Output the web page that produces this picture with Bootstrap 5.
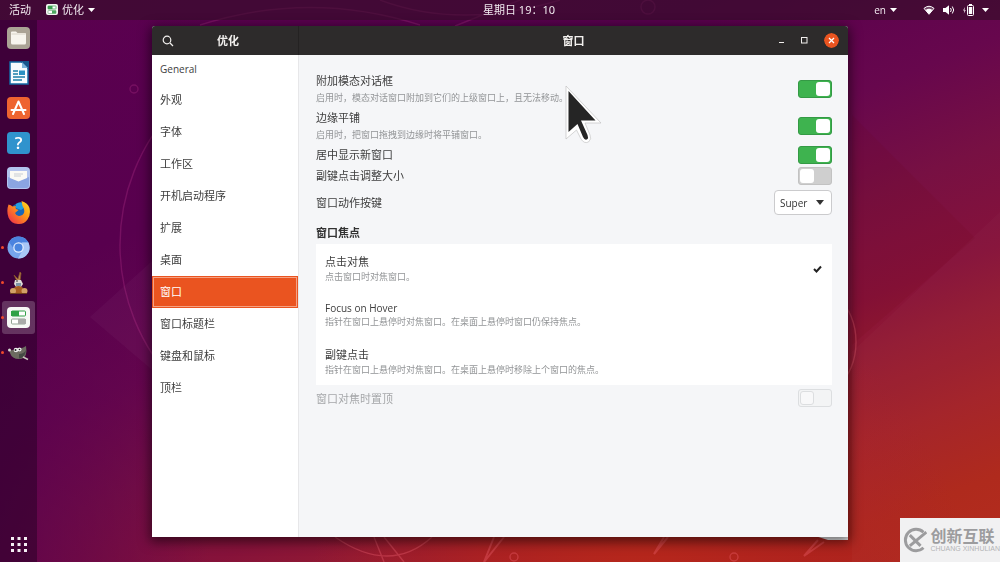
<!DOCTYPE html>
<html lang="zh-CN">
<head>
<meta charset="utf-8">
<meta name="viewport" content="width=device-width, initial-scale=1">
<title>优化 - 窗口</title>
<link href="https://cdn.jsdelivr.net/npm/bootstrap@5.3.0/dist/css/bootstrap.min.css" rel="stylesheet">
<style>
:root { --ink: #3d3d3d; --orange: #ea5420; --green: #3eb34f; }
body { font-family: "Noto Sans", "Noto Sans CJK SC", sans-serif; font-size: 11px; line-height: 16px; color: var(--ink); background: #58004c; }
.latin { font-family: "Open Sans", "Noto Sans CJK SC", sans-serif; font-size: 10px; font-weight: 500; }
.shell { min-height: 100vh; }
.wallpaper { z-index: -1; }
/* top panel */
.topbar { height: 20px; background: rgba(52, 14, 38, .62); color: #f3ecf1; display: grid; grid-template-columns: 1fr auto 1fr; }
.topbar button, .dock button, .headbar button { background: none; border: 0; padding: 0; color: inherit; line-height: 16px; }
.topbar svg, .dock svg, .headbar svg { display: block; }
.activities { margin-left: 9px; }
.appmenu { margin-left: 15px; gap: 4px; }
.tray { gap: 6px; margin-right: 11px; }
.clock { padding-left: 38px; }
/* dock */
.dock { width: 37px; background: rgba(35, 0, 35, .5); padding: 1px 2px 8px; gap: 2px; }
.dock .launcher { width: 33px; height: 33px; border-radius: 3px; position: relative; display: flex; align-items: center; justify-content: center; }
.dock .launcher.current { background: rgba(255, 255, 255, .2); }
.dock .running::before { content: ""; position: absolute; left: -1px; top: 15px; width: 3px; height: 3px; border-radius: 50%; background: #f0492c; }
.help-mark { font: 600 17px/20px "Open Sans", sans-serif; fill: #fff; }
/* window */
.desk { padding: 6px 152px 25px 115px; }
.win { background: #f5f6f8; box-shadow: 0 3px 12px 2px rgba(0, 0, 0, .55); border-radius: 3px 3px 0 0; }
.headbar { height: 29px; background: #2d2b2b; color: #f2f0ee; border-radius: 3px 3px 0 0; }
.headbar h1, .headbar h2 { font-size: 11px; line-height: 16px; font-weight: 700; margin: 0; }
.side { width: 147px; }
.head-side { border-right: 1px solid #242222; padding-left: 10px; }
.side-list { background: #fff; border-right: 1px solid #e7e7e9; }
.side-list .list-group-item { border: 0; border-radius: 0; padding: 8px; color: var(--ink); background: #fff; font-size: 11px; }
.side-list .list-group-item.short { padding-top: 6px; padding-bottom: 7px; font-size: 10px; }
.side-list .list-group-item.active { background: var(--orange); color: #fff; outline: 1px solid #f5a183; outline-offset: -2px; margin: 0; }
.closer { width: 15px; height: 15px; border-radius: 50%; }
.wm { gap: 16px; padding-right: 9px; }
.panel { padding: 15px 16px 16px 17px; }
.opt { min-height: 21px; }
.opt.tall { min-height: 37px; }
.opt label { line-height: 17px; }
.desc { font-size: 9px; line-height: 17px; color: #929496; }
.form-switch { padding: 0; margin: 0; min-height: 0; }
.form-switch .form-check-input { display: block; width: 34px; height: 18px; margin: 0; float: none; border-radius: 3px; background: #cfcfcf; border: 1px solid #c2c2c2; position: relative; transition: none; box-shadow: none; }
.form-switch .form-check-input::before { content: ""; position: absolute; left: 1px; top: 1px; width: 14px; height: 14px; border-radius: 3px; background: #fff; }
.form-switch .form-check-input:checked { background: var(--green); border-color: #349a45; }
.form-switch .form-check-input:checked::before { left: auto; right: 1px; }
.form-switch .form-check-input:disabled { background: #f3f4f5; border-color: #dcdee0; opacity: 1; }
.form-switch .form-check-input:disabled::before { background: #f8f8f9; border: 1px solid #dcdee0; }
.keysel { width: 58px; height: 25px; border: 1px solid #cbcbcd; border-radius: 4px; font-size: 10px; line-height: 16px; padding: 3px 5px; color: #333; background: #fff url("data:image/svg+xml,%3Csvg xmlns='http://www.w3.org/2000/svg' viewBox='0 0 8 5'%3E%3Cpath d='M0 0h8L4 5z' fill='%23333'/%3E%3C/svg%3E") no-repeat right 7px center / 8px 5px; }
.focus-title { font-size: 11px; line-height: 16px; font-weight: 700; margin: 10px 0 3px; color: #333; }
.focus-list { background: #fff; padding: 2px 0 0; gap: 2px; }
.focus-list .list-group-item { border: 0; background: none; padding: 8px 10px 8px 9px; color: var(--ink); }
.focus-list .desc { line-height: 14px; }
.focus-list .name { line-height: 16px; }
.focus-list .name.latin { line-height: 13px; }
.focus-list .tick { visibility: hidden; }
.focus-list input:checked ~ .tick { visibility: visible; }
.off label { color: #a5a7a9; }
.pointer { left: 59%; top: 58px; pointer-events: none; }
/* site mark */
.sitemark { width: 100px; height: 44px; background: #f1f1f2; color: #9c9c9e; gap: 3px; padding-left: 2px; }
.sitemark .zh { font-size: 16px; line-height: 18px; font-weight: 700; }
.sitemark .en { font: 7px/8px "Liberation Sans", sans-serif; white-space: nowrap; color: #b4b4b6; }
</style>
</head>
<body>
<svg class="wallpaper position-fixed top-0 start-0 w-100 h-100" viewBox="0 0 1000 562" preserveAspectRatio="none" aria-hidden="true">
  <defs>
    <linearGradient id="sky" gradientUnits="userSpaceOnUse" x1="0" y1="0" x2="328" y2="819">
      <stop offset="0" stop-color="#5c0050"/><stop offset=".3" stop-color="#58004e"/><stop offset=".46" stop-color="#67074d"/>
      <stop offset=".57" stop-color="#771043"/><stop offset=".68" stop-color="#86123a"/><stop offset=".74" stop-color="#921a32"/>
      <stop offset=".83" stop-color="#a32127"/><stop offset=".92" stop-color="#ae2619"/><stop offset="1" stop-color="#b3281a"/>
    </linearGradient>
    <radialGradient id="glow" gradientUnits="userSpaceOnUse" cx="640" cy="600" r="330">
      <stop offset="0" stop-color="#b8281a"/><stop offset=".5" stop-color="#b0221f" stop-opacity=".7"/><stop offset="1" stop-color="#a81e28" stop-opacity="0"/>
    </radialGradient>
    <linearGradient id="leftdim" x1="0" y1="0" x2="1" y2="0"><stop offset="0" stop-color="#58004e" stop-opacity=".75"/><stop offset="1" stop-color="#58004e" stop-opacity="0"/></linearGradient>
  </defs>
  <rect width="1000" height="562" fill="url(#sky)"/>
  <rect width="1000" height="562" fill="url(#glow)"/>
  <rect width="210" height="562" fill="url(#leftdim)"/>
  <path d="M90 317L170 245V385z" fill="#fff" opacity=".03"/>
  <path d="M1000 212L852 352V562H1000z" fill="#fff" opacity=".02"/>
  <path d="M852 115L975 238 852 345z" fill="#600" opacity=".08"/>
  <g fill="none" stroke="#d0409a" stroke-opacity=".25" stroke-width="1.4">
    <circle cx="320" cy="245" r="200"/><circle cx="134" cy="89" r="4"/><circle cx="648" cy="7" r="7"/>
    <path d="M200 25Q310 -10 420 25M455 26L520 0M380 0Q460 30 560 0"/>
  </g>
  <g fill="none" stroke="#ff7080" stroke-opacity=".3" stroke-width="1.4">
    <path d="M374 537l10 25M335 537Q390 575 432 537M384 537l20 25"/><circle cx="514" cy="557" r="4"/><circle cx="734" cy="557" r="4"/>
    <path d="M494 537l-10 25 20-25M664 537l-10 17 14-17" stroke-width="2"/><circle cx="790" cy="342" r="66"/>
    <path d="M818 540l-14 16 20-14" stroke-width="2"/>
  </g>
  <path d="M812 535H848V540H828z" fill="#f1f1f3"/>
</svg>

<div class="shell d-flex flex-column">
  <header class="topbar align-items-center">
    <div class="d-flex align-items-center">
      <button class="activities" type="button">活动</button>
      <button class="appmenu d-flex align-items-center" type="button">
        <svg width="12" height="12" viewBox="0 0 24 24"><rect width="24" height="22" rx="4" fill="#f4f6f2"/><rect x="4" y="4" width="16" height="6" rx="1" fill="#fff" stroke="#3b9e50" stroke-width="1.5"/><path d="M4 4h9v6H4z" fill="#3b9e50"/><rect x="4" y="13" width="16" height="6" rx="1" fill="#fff" stroke="#84b68d" stroke-width="1.5"/><path d="M12 13h8v6h-8z" fill="#4ca960"/></svg>
        优化
        <svg width="7" height="4" viewBox="0 0 7 4"><path d="M0 0h7L3.500 4z" fill="#fff"/></svg>
      </button>
    </div>
    <time class="clock">星期日 19：10</time>
    <div class="tray d-flex align-items-center justify-content-end">
      <button class="latin d-flex align-items-center gap-1 me-3 pe-1" type="button">en <svg width="7" height="4" viewBox="0 0 7 4"><path d="M0 0h7L3.500 4z" fill="#fff"/></svg></button>
      <button class="d-flex align-items-center gap-2" type="button" aria-label="系统菜单">
        <svg width="12" height="10" viewBox="0 0 12 10"><path d="M1 3.400Q6-.9 11 3.400L6 9.300z" fill="#fff" fill-opacity=".25" stroke="#fff"/><path d="M2.600 5Q6 2.300 9.400 5L6 9z" fill="#fff"/></svg>
        <svg width="12" height="10" viewBox="0 0 12 10"><path d="M0 3h2.500L6 .3v9.400L2.500 7H0z" fill="#fff"/><path d="M7.500 3q1.600 2 0 4M9.300 1.500q2.800 3.500 0 7" fill="none" stroke="#fff"/></svg>
        <svg width="11" height="12" viewBox="0 0 11 12"><path d="M2 3L0 6.500h1.300L.8 9.500 2.800 6H1.500z" fill="#e8d9e4"/><rect x="4.500" y="1.500" width="6" height="10" rx="1" fill="none" stroke="#fff"/><path d="M5.800 3h3.400v7H5.800zM6 0h3v1.500H6z" fill="#fff"/></svg>
        <svg width="7" height="4" viewBox="0 0 7 4"><path d="M0 0h7L3.500 4z" fill="#fff"/></svg>
      </button>
    </div>
  </header>

  <div class="d-flex flex-fill">
    <nav class="dock d-flex flex-column flex-shrink-0" aria-label="程序坞">
      <button class="launcher" type="button" aria-label="文件"><svg width="23" height="22" viewBox="0 0 23 22"><rect width="23" height="22" rx="4" fill="#aaa395"/><path d="M4 5.500q0-1 1-1h4l1.500 1.500H18q1 0 1 1V16q0 1.500-1.500 1.500h-12Q4 17.500 4 16z" fill="#f7f5ee"/><path d="M4.500 7h14" stroke="#d8d3c7"/></svg></button>
      <button class="launcher" type="button" aria-label="文档"><svg width="20" height="24" viewBox="0 0 20 24"><path d="M1 1h12l6 6v16H1z" fill="#f9fcfe" stroke="#156aa5" stroke-width="1.500"/><path d="M11 0h9v9z" fill="#17548c"/><path d="M13 1v6h6z" fill="#7db3dc"/><path d="M4 10h5M4 13h5M4 16h12M4 19h9" stroke="#1d7fa9" stroke-width="1.500"/><rect x="10" y="9.500" width="6" height="4.500" fill="#2b91c2"/></svg></button>
      <button class="launcher" type="button" aria-label="软件"><svg width="23" height="22" viewBox="0 0 23 22"><rect width="23" height="22" rx="4" fill="#ee6430"/><path d="M6 17L11.500 4.500 17 17M4.500 13h14" fill="none" stroke="#fff" stroke-width="2" stroke-linecap="round" stroke-linejoin="round"/></svg></button>
      <button class="launcher" type="button" aria-label="帮助"><svg width="23" height="22" viewBox="0 0 23 22"><rect width="23" height="22" rx="3.500" fill="#3093cd"/><text class="help-mark" x="11.500" y="17" text-anchor="middle">?</text></svg></button>
      <button class="launcher" type="button" aria-label="邮件"><svg width="23" height="22" viewBox="0 0 23 22"><rect width="23" height="22" rx="4" fill="#b3c4ee"/><path d="M1 10l10.500 4L22 10v8q0 3-3 3H4q-3 0-3-3z" fill="#8ba5e2"/><path d="M3 4h17v7l-8.500 3.500L3 11z" fill="#fbfaf5"/><path d="M7 7h9M7 9h7" stroke="#c8cdd4"/></svg></button>
      <button class="launcher" type="button" aria-label="Firefox"><svg width="24" height="24" viewBox="0 0 24 24"><defs><linearGradient id="fox" x1="1" y1="0" x2="0" y2="1"><stop offset="0" stop-color="#ffe226"/><stop offset=".4" stop-color="#ff9a16"/><stop offset="1" stop-color="#ee2152"/></linearGradient></defs><circle cx="12.500" cy="11" r="9" fill="#1767b8"/><path d="M9 3q3-2.500 6-1.500 3 1 4 4L14 9 9 7z" fill="#21a0e0"/><path d="M1.500 3.500Q4 4 5.500 5.500L9 5q-.8 1.500 0 3l2.500 1-3.500 3q1.500 3.500 4.500 3 3.500-.5 4.500-3 1-4-1.500-7l-1-5Q21 2 22.500 7q1.500 7-2 11.500Q17 23.500 11 23 4 22.500 1.500 16.500-.8 10 1.500 3.500z" fill="url(#fox)"/></svg></button>
      <button class="launcher running" type="button" aria-label="Chromium"><svg width="23" height="23" viewBox="0 0 23 23"><circle cx="11.500" cy="11.500" r="11" fill="#76a4ec"/><path d="M2 6Q6 .5 11.500 .5q6.500 0 10 6H11.500L7 13z" fill="#4b83df"/><path d="M21.500 6.500Q25 15 18 20.500q-3 2.300-7 2l5-9-1-7z" fill="#a9c7f6"/><circle cx="11.500" cy="11.500" r="5.300" fill="#e2ecfd"/><circle cx="11.500" cy="11.500" r="4" fill="#4a85df"/></svg></button>
      <button class="launcher running" type="button" aria-label="Kazam"><svg width="20" height="24" viewBox="0 0 20 24"><path d="M8 10L5 4l4 4 2-7 1 1-1 8z" fill="#b98958" stroke="#875226" stroke-width=".8"/><path d="M6 9h6l2 4-2 3H7l-2-3z" fill="#dfddda"/><path d="M7 12h5v3H7z" fill="#7d96a8"/><ellipse cx="9.500" cy="19" rx="5" ry="4" fill="#a85e23"/><circle cx="4" cy="20" r="3" fill="#d2a267"/><circle cx="15.500" cy="20" r="3" fill="#d2a267"/><path d="M1 22.500h17" stroke="#70401d"/><circle cx="8" cy="10" r=".8" fill="#222"/></svg></button>
      <button class="launcher current running" type="button" aria-label="优化"><svg width="23" height="21" viewBox="0 0 23 21"><rect width="23" height="21" rx="4" fill="#f7f8f6"/><rect x="4.500" y="4" width="14" height="5" rx="1" fill="#fff" stroke="#329f48"/><path d="M4 4h8v5H4z" fill="#30a146"/><rect x="4.500" y="12" width="14" height="5" rx="1" fill="#fff" stroke="#91a394"/><path d="M11 12h8v5h-8z" fill="#a9aaa9"/></svg></button>
      <button class="launcher running" type="button" aria-label="GIMP"><svg width="21" height="16" viewBox="0 0 21 16"><path d="M1 5q5 1 8-2 5 1 9-2 .8 5 0 8-1 5-7 5-7 0-9-6z" fill="#6c6b60"/><path d="M11 9q5 0 7-4-1 8-7 8.500z" fill="#444a44"/><circle cx="8" cy="5" r="2.300" fill="#eee"/><circle cx="11.500" cy="4.500" r="2" fill="#eee"/><circle cx="7.500" cy="5" r="1" fill="#222"/><circle cx="11.500" cy="4.500" r=".8" fill="#222"/><circle cx="1.500" cy="5" r="1.500" fill="#d8dbd5"/><path d="M15 12l5 2.500" stroke="#c9c5be" stroke-width="1.500"/></svg></button>
      <button class="mt-auto d-flex justify-content-center" type="button" aria-label="显示应用程序"><svg width="16" height="20" viewBox="0 0 16 20" fill="#f5eff4"><path d="M0 3h3v3H0zM6.500 3h3v3h-3zM13 3h3v3h-3zM0 9h3v3H0zM6.500 9h3v3h-3zM13 9h3v3h-3zM0 15h3v3H0zM6.500 15h3v3h-3zM13 15h3v3h-3z"/></svg></button>
    </nav>

    <main class="desk d-flex flex-fill">
      <section class="win d-flex flex-column flex-fill position-relative">
        <div class="headbar d-flex">
          <div class="side head-side d-flex align-items-center flex-shrink-0">
            <button type="button" aria-label="搜索"><svg width="12" height="12" viewBox="0 0 12 12" fill="none" stroke="#f2f0ee" stroke-width="1.200"><circle cx="5" cy="5" r="3.800"/><path d="M8 8l3 3"/></svg></button>
            <h1 class="flex-fill text-center pe-3">优化</h1>
          </div>
          <div class="d-flex align-items-center flex-fill position-relative justify-content-end">
            <h2 class="position-absolute start-0 end-0 text-center">窗口</h2>
            <div class="wm d-flex align-items-center position-relative">
              <button type="button" aria-label="最小化"><svg width="7" height="7" viewBox="0 0 7 7"><path d="M1 5.500h5" stroke="#f2f0ee"/></svg></button>
              <button type="button" aria-label="最大化"><svg width="7" height="7" viewBox="0 0 7 7"><rect x=".5" y=".5" width="5.500" height="5.500" fill="none" stroke="#f2f0ee"/></svg></button>
              <button type="button" aria-label="关闭"><svg class="closer" viewBox="0 0 15 15"><circle cx="7.500" cy="7.500" r="7.500" fill="#ea5420"/><path d="M5 5l5 5M10 5l-5 5" stroke="#fff" stroke-width="1.300"/></svg></button>
            </div>
          </div>
        </div>

        <div class="d-flex flex-fill">
          <nav class="side side-list list-group list-group-flush flex-shrink-0" aria-label="类别">
            <a href="#" class="list-group-item short latin">General</a>
            <a href="#" class="list-group-item">外观</a>
            <a href="#" class="list-group-item">字体</a>
            <a href="#" class="list-group-item">工作区</a>
            <a href="#" class="list-group-item">开机启动程序</a>
            <a href="#" class="list-group-item">扩展</a>
            <a href="#" class="list-group-item">桌面</a>
            <a href="#" class="list-group-item active" aria-current="page">窗口</a>
            <a href="#" class="list-group-item">窗口标题栏</a>
            <a href="#" class="list-group-item">键盘和鼠标</a>
            <a href="#" class="list-group-item">顶栏</a>
          </nav>

          <form class="panel flex-fill">
            <div class="opt tall d-flex align-items-center justify-content-between">
              <div><label class="d-block" for="modal">附加模态对话框</label><div class="desc">启用时，模态对话窗口附加到它们的上级窗口上，且无法移动。</div></div>
              <div class="form-check form-switch"><input class="form-check-input" type="checkbox" role="switch" id="modal" checked></div>
            </div>
            <div class="opt tall d-flex align-items-center justify-content-between">
              <div><label class="d-block" for="tiling">边缘平铺</label><div class="desc">启用时，把窗口拖拽到边缘时将平铺窗口。</div></div>
              <div class="form-check form-switch"><input class="form-check-input" type="checkbox" role="switch" id="tiling" checked></div>
            </div>
            <div class="opt d-flex align-items-center justify-content-between">
              <label for="center">居中显示新窗口</label>
              <div class="form-check form-switch"><input class="form-check-input" type="checkbox" role="switch" id="center" checked></div>
            </div>
            <div class="opt d-flex align-items-center justify-content-between">
              <label for="resize">副键点击调整大小</label>
              <div class="form-check form-switch"><input class="form-check-input" type="checkbox" role="switch" id="resize"></div>
            </div>
            <div class="opt d-flex align-items-center justify-content-between pt-1">
              <label for="actionkey">窗口动作按键</label>
              <select class="form-select keysel latin" id="actionkey"><option>Super</option><option>Alt</option></select>
            </div>

            <h3 class="focus-title">窗口焦点</h3>
            <div class="focus-list list-group rounded-0" role="radiogroup" aria-label="窗口焦点">
              <label class="list-group-item d-flex align-items-center">
                <input class="btn-check" type="radio" name="focus" checked>
                <span class="flex-fill"><span class="name d-block">点击对焦</span><span class="desc d-block">点击窗口时对焦窗口。</span></span>
                <svg class="tick" width="9" height="8" viewBox="0 0 9 8"><path d="M1 4l2.500 2.500L8 1.500" fill="none" stroke="#222" stroke-width="2"/></svg>
              </label>
              <label class="list-group-item d-flex align-items-center">
                <input class="btn-check" type="radio" name="focus">
                <span class="flex-fill"><span class="name latin d-block">Focus on Hover</span><span class="desc d-block">指针在窗口上悬停时对焦窗口。在桌面上悬停时窗口仍保持焦点。</span></span>
                <svg class="tick" width="9" height="8" viewBox="0 0 9 8"><path d="M1 4l2.500 2.500L8 1.500" fill="none" stroke="#222" stroke-width="2"/></svg>
              </label>
              <label class="list-group-item d-flex align-items-center">
                <input class="btn-check" type="radio" name="focus">
                <span class="flex-fill"><span class="name d-block">副键点击</span><span class="desc d-block">指针在窗口上悬停时对焦窗口。在桌面上悬停时移除上个窗口的焦点。</span></span>
                <svg class="tick" width="9" height="8" viewBox="0 0 9 8"><path d="M1 4l2.500 2.500L8 1.500" fill="none" stroke="#222" stroke-width="2"/></svg>
              </label>
            </div>
            <div class="opt off d-flex align-items-center justify-content-between pt-1">
              <label for="raise">窗口对焦时置顶</label>
              <div class="form-check form-switch"><input class="form-check-input" type="checkbox" role="switch" id="raise" disabled></div>
            </div>
          </form>
        </div>
        <svg class="pointer position-absolute" width="40" height="62" viewBox="0 0 40 62" aria-hidden="true"><path d="M3 2V55L13.500 46 18 55Q21 60 25.500 58 29 55 27 51L22 39H38z" fill="#fff" stroke="#bbb" stroke-width=".6"/><path d="M5.500 7V48L14.500 40 20 53Q22 57 24.500 55 25.500 54 24.500 51L18 36.500H32.500z" fill="#252525"/></svg>
      </section>
    </main>
  </div>
</div>

<aside class="sitemark position-fixed bottom-0 end-0 d-flex align-items-center">
  <svg width="26" height="26" viewBox="0 0 26 26" fill="none" stroke="#9c9c9e"><path d="M22 5A11 11 0 1 0 22 21" stroke-width="3"/><path d="M8 8l11 11M25 5L8 19" stroke-width="3"/></svg>
  <div><div class="zh">创新互联</div><div class="en">CHUANG XINHULIAN</div></div>
</aside>
<script src="https://cdn.jsdelivr.net/npm/bootstrap@5.3.0/dist/js/bootstrap.bundle.min.js"></script>
</body>
</html>
